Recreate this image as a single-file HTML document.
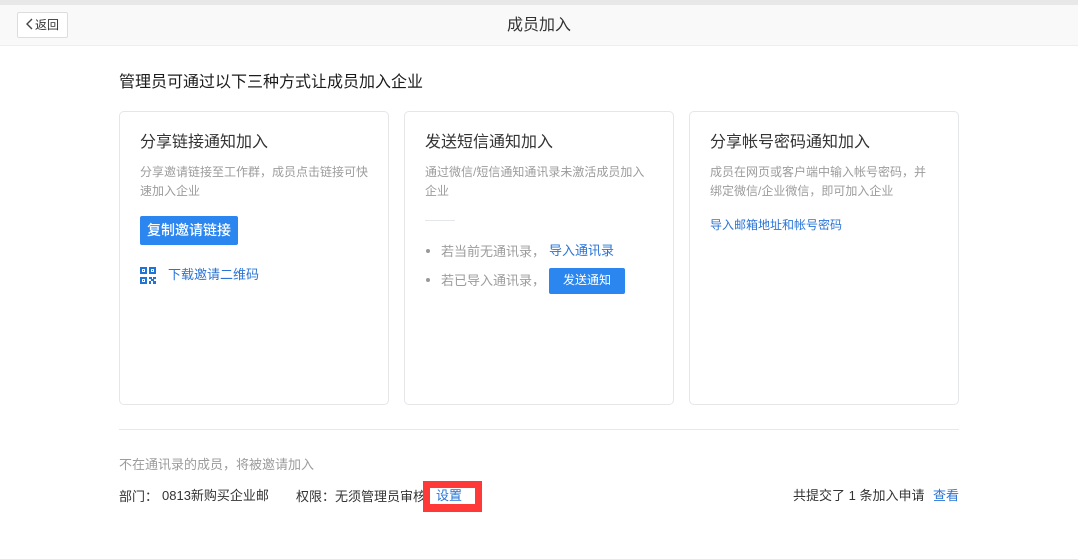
<!DOCTYPE html>
<html lang="zh-CN">
<head>
<meta charset="utf-8">
<title>成员加入</title>
<style>
html,body{margin:0;padding:0;background:#fff}
body{width:1078px;height:560px;position:relative;overflow:hidden;font-family:"Liberation Sans","Noto Sans CJK SC",sans-serif;color:#333}
.a{position:absolute;white-space:nowrap}
.t{position:absolute;white-space:nowrap;line-height:20px;height:20px}
.card{position:absolute;top:111px;width:268px;height:292px;border:1px solid #e4e6e9;border-radius:5px;background:#fff}
.g{color:#9c9c9c}
.b{color:#2a74d6}
.p{font-family:"Noto Sans CJK TC",sans-serif}
.btn{position:absolute;background:#2b86f0;color:#fff;border-radius:2px;text-align:center}
.dot{position:absolute;width:4px;height:4px;border-radius:50%;background:#999}
</style>
</head>
<body>
<div class="a" style="left:0;top:0;width:1078px;height:5px;background:#e8e8e8"></div>
<div class="a" style="left:0;top:5px;width:1078px;height:40px;background:#f9f9f9;border-bottom:1px solid #eee"></div>
<div class="a" style="left:17px;top:12px;width:49px;height:24px;background:#fff;border:1px solid #ddd;border-radius:2px"></div>
<svg class="a" style="left:25px;top:18px" width="9" height="12" viewBox="0 0 9 12"><path d="M7 1 L2 6 L7 11" fill="none" stroke="#444" stroke-width="1.4"/></svg>
<div class="t" style="left:35px;top:15px;font-size:12px;color:#333">返回</div>
<div class="t" style="left:507px;top:16px;font-size:16px;color:#333">成员加入</div>

<div class="t" style="left:119px;top:73px;font-size:16px;color:#1c1c1c">管理员可通过以下三种方式让成员加入企业</div>

<div class="card" style="left:119px"></div>
<div class="card" style="left:404px"></div>
<div class="card" style="left:689px"></div>

<!-- card 1 -->
<div class="t" style="left:140px;top:133px;font-size:16px;color:#333">分享链接通知加入</div>
<div class="t g" style="left:140px;top:162px;font-size:12px">分享邀请链接至工作群<span class="p">，</span>成员点击链接可快</div>
<div class="t g" style="left:140px;top:181px;font-size:12px">速加入企业</div>
<div class="btn" style="left:140px;top:216px;width:98px;height:29px;line-height:28px;font-size:14px;font-weight:500">复制邀请链接</div>
<svg class="a" style="left:140px;top:267px" width="17" height="17" viewBox="0 0 17 17" shape-rendering="crispEdges">
<g fill="none" stroke="#1f74d8" stroke-width="2">
<rect x="1" y="1" width="5" height="5"/>
<rect x="10" y="1" width="5" height="5"/>
<rect x="1" y="11" width="5" height="5"/>
</g>
<g fill="#1f74d8">
<rect x="3" y="3" width="1" height="1"/><rect x="12" y="3" width="1" height="1"/><rect x="3" y="13" width="1" height="1"/>
<rect x="9" y="10" width="3" height="2"/><rect x="13" y="10" width="3" height="2"/><rect x="11" y="12" width="3" height="2"/><rect x="9" y="14" width="2" height="3"/><rect x="13" y="14" width="3" height="3"/>
</g>
</svg>
<div class="t b" style="left:168px;top:265px;font-size:13px">下载邀请二维码</div>

<!-- card 2 -->
<div class="t" style="left:425px;top:133px;font-size:16px;color:#333">发送短信通知加入</div>
<div class="t g" style="left:425px;top:162px;font-size:12px">通过微信/短信通知通讯录未激活成员加入</div>
<div class="t g" style="left:425px;top:181px;font-size:12px">企业</div>
<div class="a" style="left:425px;top:220px;width:30px;height:1px;background:#e4e6e9"></div>
<div class="dot" style="left:426px;top:249px"></div>
<div class="t g" style="left:441px;top:241px;font-size:13px">若当前无通讯录<span class="p">，</span></div>
<div class="t b" style="left:549px;top:241px;font-size:13px">导入通讯录</div>
<div class="dot" style="left:426px;top:278px"></div>
<div class="t g" style="left:441px;top:270px;font-size:13px">若已导入通讯录<span class="p">，</span></div>
<div class="btn" style="left:549px;top:268px;width:76px;height:26px;line-height:25px;font-size:12px">发送通知</div>

<!-- card 3 -->
<div class="t" style="left:710px;top:133px;font-size:16px;color:#333">分享帐号密码通知加入</div>
<div class="t g" style="left:710px;top:162px;font-size:12px">成员在网页或客户端中输入帐号密码<span class="p">，</span>并</div>
<div class="t g" style="left:710px;top:181px;font-size:12px">绑定微信/企业微信<span class="p">，</span>即可加入企业</div>
<div class="t b" style="left:710px;top:215px;font-size:12px">导入邮箱地址和帐号密码</div>

<!-- bottom -->
<div class="a" style="left:119px;top:429px;width:840px;height:1px;background:#e8e8e8"></div>
<div class="t g" style="left:119px;top:454px;font-size:13px">不在通讯录的成员<span class="p">，</span>将被邀请加入</div>
<div class="t" style="left:119px;top:486px;font-size:13px;color:#333">部门<span class="p">：</span></div>
<div class="t" style="left:162px;top:486px;font-size:13px;color:#333">0813新购买企业邮</div>
<div class="t" style="left:296px;top:486px;font-size:13px;color:#333">权限<span class="p">：</span>无须管理员审核</div>
<div class="a" style="left:423px;top:481px;width:45px;height:16px;border:solid #ff3838;border-width:7px 7px 8px 7px;background:#fff"></div>
<div class="t b" style="left:436px;top:486px;font-size:13px">设置</div>
<div class="t" style="left:793px;top:486px;font-size:13px;color:#333">共提交了 1 条加入申请</div>
<div class="t b" style="left:933px;top:486px;font-size:13px">查看</div>
<div class="a" style="left:0;top:559px;width:1078px;height:1px;background:#e8e8e8"></div>
</body>
</html>
